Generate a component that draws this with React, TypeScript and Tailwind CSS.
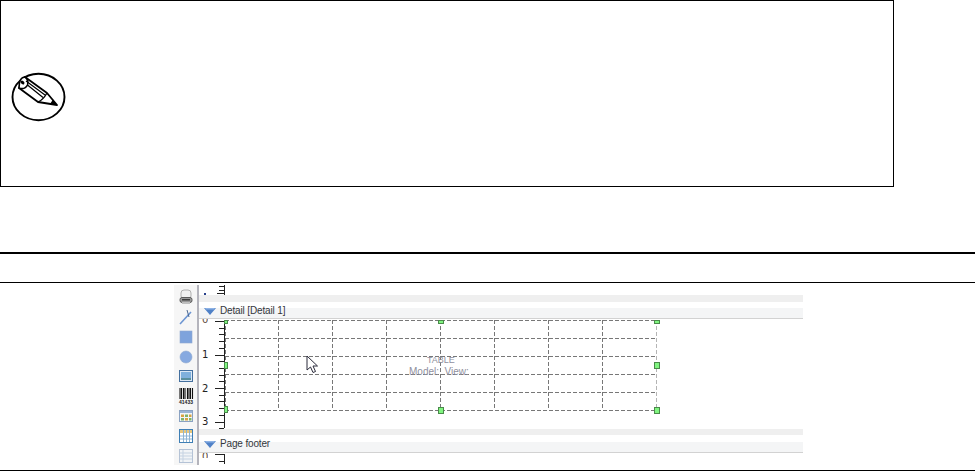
import React from "react";

const uiFont = { fontFamily: '"Liberation Sans", Arial, sans-serif' };
const rulerFont = { fontFamily: '"DejaVu Sans", sans-serif' };

function PencilNote() {
  return (
    <svg width="56" height="50" viewBox="0 0 56 50" fill="none" stroke="#000" className="mt-[6px]">
      <ellipse cx="28.5" cy="25" rx="26" ry="23.2" strokeWidth="1.9" />
      <path d="M15 5 L9 16 L28 30 L47 33 L37 21 Z" strokeWidth="1.8" fill="#fff" strokeLinejoin="round" />
      <path d="M15 5 Q9 5 9 16 Q15 18 17.5 13 Q19 8 15 5 Z" strokeWidth="1.6" fill="#fff" />
      <ellipse cx="12.5" cy="10.5" rx="2.2" ry="1.5" fill="#000" stroke="none" transform="rotate(40 12.5 10.5)" />
      <path d="M17.5 13 L33 25.5 M16 9 L35 23" strokeWidth="1.2" />
      <path d="M28 30 Q33 28 37 21" strokeWidth="1.4" />
      <path d="M40 32 L47 33 L43 27.5 Z" fill="#000" stroke="none" />
    </svg>
  );
}

function ToolIcon({ children }: { children: React.ReactNode }) {
  return (
    <svg width="16" height="16" viewBox="0 0 16 16" className="block">
      {children}
    </svg>
  );
}

function Toolbar() {
  return (
    <div className="flex w-[23px] flex-col items-center bg-[#f6f6f6]">
      <div className="flex h-[23px] items-center">
        <ToolIcon>
          <rect x="3" y="1" width="10" height="9" rx="3" fill="#f0f0f0" stroke="#b0b0b0" />
          <rect x="2" y="8.5" width="12" height="5" rx="2" fill="#9a9a9a" stroke="#5c5c5c" />
          <rect x="4" y="10" width="8" height="1.5" fill="#3e3e3e" />
          <rect x="4" y="13" width="8" height="2" fill="#c0c0c0" />
        </ToolIcon>
      </div>
      <div className="flex h-[18px] items-center">
        <ToolIcon>
          <path d="M2 15 L13 3" stroke="#6c95d2" strokeWidth="1.6" />
          <path d="M9 1 L11 8" stroke="#49668f" strokeWidth="1" />
        </ToolIcon>
      </div>
      <div className="flex h-[21px] items-center">
        <ToolIcon>
          <rect x="2" y="2" width="12" height="12" fill="#7ea3dc" stroke="#8fa8cf" strokeWidth="0.6" />
        </ToolIcon>
      </div>
      <div className="flex h-[19px] items-center">
        <ToolIcon>
          <circle cx="8" cy="8" r="6" fill="#86a9e0" stroke="#8fa8cf" strokeWidth="0.6" />
        </ToolIcon>
      </div>
      <div className="flex h-[20px] items-center">
        <ToolIcon>
          <rect x="1.5" y="2.5" width="13" height="11" fill="#dce8f5" stroke="#44709f" />
          <rect x="3" y="4" width="10" height="6" fill="#7fb0dc" />
          <rect x="3" y="10" width="10" height="2" fill="#5a8f9d" />
        </ToolIcon>
      </div>
      <div className="flex h-[20px] items-center">
        <ToolIcon>
          <path d="M2 0 V11 M3.5 0 V11 M5.5 0 V11 M7 0 V11 M9.5 0 V11 M11 0 V11 M12.5 0 V11 M14.5 0 V11" stroke="#111" strokeWidth="1.1" />
          <text x="8" y="15.5" textAnchor="middle" fontSize="5" fontWeight="700" fill="#222" stroke="none">41433</text>
        </ToolIcon>
      </div>
      <div className="flex h-[20px] items-center">
        <ToolIcon>
          <rect x="1.5" y="2.5" width="13" height="11" fill="#f3f6fa" stroke="#8aa2c2" />
          <rect x="2" y="3" width="12" height="2" fill="#9bb5d6" />
          <rect x="3" y="6.5" width="3" height="2.5" fill="#d9a441" />
          <rect x="7" y="6.5" width="3" height="2.5" fill="#7eb36a" />
          <rect x="11" y="6.5" width="2.5" height="2.5" fill="#d9a441" />
          <rect x="3" y="10" width="3" height="2.5" fill="#7eb36a" />
          <rect x="7" y="10" width="3" height="2.5" fill="#d9a441" />
          <rect x="11" y="10" width="2.5" height="2.5" fill="#7eb36a" />
        </ToolIcon>
      </div>
      <div className="flex h-[20px] items-center">
        <ToolIcon>
          <rect x="1.5" y="1.5" width="13" height="13" fill="#fff" stroke="#3f7fb5" />
          <rect x="2" y="2" width="12" height="3" fill="#e8c77a" />
          <path d="M2 8 H14 M2 11 H14 M5.5 2 V14 M8.5 2 V14 M11.5 2 V14" stroke="#8db4d4" strokeWidth="1" />
        </ToolIcon>
      </div>
      <div className="flex h-[19px] items-center opacity-60">
        <ToolIcon>
          <rect x="1.5" y="1.5" width="13" height="13" fill="#eef3f8" stroke="#8aa2c2" />
          <path d="M2 5 H14 M2 8 H14 M2 11 H14 M5 2 V14" stroke="#a5bcd6" strokeWidth="1" />
        </ToolIcon>
      </div>
    </div>
  );
}

function BandHeader({ label, lift }: { label: string; lift: string }) {
  return (
    <div className="h-[11px] border-b border-[#d2d2d2] bg-[#f4f5f6] pl-[5px]">
      <div className={`flex items-center gap-[4px] ${lift}`}>
        <svg width="12" height="7" viewBox="0 0 12 7" className="shrink-0">
          <path d="M0 0 H12 L6 7 Z" fill="#4f81c7" />
          <path d="M1 0 H11 L10 1.5 H2 Z" fill="#8fb3e6" />
        </svg>
        <span className="text-[10px] leading-[10px] tracking-[-0.15px] whitespace-nowrap text-[#33373d]">{label}</span>
      </div>
    </div>
  );
}

const rulerTicks = Array.from({ length: 17 }, (_, i) => 2 + i * 6.7);

function Ruler() {
  return (
    <div className="relative h-[110px] w-[26px] shrink-0" style={rulerFont}>
      <svg width="26" height="110" viewBox="0 0 26 110" className="block">
        <path d="M25.5 1 V109" stroke="#222" strokeWidth="1" />
        {rulerTicks.map((y, i) => (
          <path
            key={y}
            d={`M${i % 5 === 0 ? 16 : 20} ${Math.round(y) + 0.5} H25`}
            stroke="#222"
            strokeWidth="1"
          />
        ))}
      </svg>
      <span className="absolute top-0 left-[3px] h-[5px] overflow-hidden text-[10px] leading-[10px] text-[#5c4a3a]">
        <span className="relative top-[-4px]">0</span>
      </span>
      <span className="absolute top-[31px] left-[3px] text-[10px] leading-[10px] text-[#222]">1</span>
      <span className="absolute top-[65px] left-[3px] text-[10px] leading-[10px] text-[#222]">2</span>
      <span className="absolute top-[98px] left-[3px] text-[10px] leading-[10px] text-[#222]">3</span>
    </div>
  );
}

function Handle({ className }: { className: string }) {
  return <div className={`absolute border border-[#4a8a4a] bg-[#80f580] ${className}`} />;
}

function TableGrid() {
  const xs = [53, 107, 161, 215, 269, 323, 377];
  const ys = [19, 37, 55, 73];
  return (
    <div className="relative h-[110px] flex-1">
      <svg width="440" height="100" viewBox="0 0 440 100" className="block" fill="none">
        <g stroke="#777" strokeWidth="1" strokeDasharray="4 2">
          <path d="M0 1.5 H432" />
          {ys.map((y) => (
            <path key={y} d={`M0 ${y}.5 H432`} />
          ))}
          <path d="M0 91.5 H432" />
          <path d="M0.5 1 V91" />
          {xs.map((x) => (
            <path key={x} d={`M${x}.5 1 V91`} />
          ))}
        </g>
        <path d="M431.5 1 V91" stroke="#b5b5b5" strokeWidth="1" strokeDasharray="4 2" />
      </svg>
      <Handle className="top-[1px] left-[-1px] h-[4px] w-[4px]" />
      <Handle className="top-[1px] left-[213px] h-[4px] w-[6px]" />
      <Handle className="top-[1px] left-[429px] h-[4px] w-[6px]" />
      <Handle className="top-[43px] left-[-1px] h-[7px] w-[4px]" />
      <Handle className="top-[43px] left-[429px] h-[7px] w-[6px]" />
      <Handle className="top-[87px] left-[-1px] h-[7px] w-[4px]" />
      <Handle className="top-[88px] left-[213px] h-[7px] w-[6px]" />
      <Handle className="top-[88px] left-[429px] h-[7px] w-[6px]" />
      <div className="absolute top-[36px] left-[184px] text-center text-[10px] leading-[11px] whitespace-nowrap text-[#8f8f9e]">
        <div className="pl-[4px] text-[9px]">TABLE</div>
        <div>Model:&nbsp; View:</div>
      </div>
      <svg width="13" height="19" viewBox="0 0 13 19" className="absolute top-[36px] left-[81px]">
        <path d="M1 1 V15 L4.5 12 L7 17.5 L9.5 16.5 L7 11 H11.5 Z" fill="#fff" stroke="#2a2a3a" strokeWidth="1" />
      </svg>
    </div>
  );
}

function ReportDesigner() {
  return (
    <div className="ml-[174px] flex h-[180px] w-[629px]" style={uiFont}>
      <Toolbar />
      <div className="w-[2px] bg-[#b4b4bc]" />
      <div className="flex min-w-0 flex-1 flex-col">
        <div className="relative h-[10px]">
          <svg width="26" height="10" viewBox="0 0 26 10" className="block">
            <path d="M25.5 0 V10 M20 1.5 H25 M20 5.5 H25 M18 8.5 H25" fill="none" stroke="#222" strokeWidth="1" />
            <rect x="5" y="8" width="2" height="2" fill="#27408b" />
          </svg>
        </div>
        <div className="h-[7px] bg-[#efefef]" />
        <div className="h-[6px]" />
        <BandHeader label="Detail [Detail 1]" lift="-translate-y-[2px]" />
        <div className="flex">
          <Ruler />
          <TableGrid />
        </div>
        <div className="h-[6px] bg-[#efefef]" />
        <div className="h-[7px]" />
        <BandHeader label="Page footer" lift="-translate-y-[3px]" />
        <div className="relative flex h-[12px] overflow-hidden">
          <svg width="26" height="12" viewBox="0 0 26 12" className="block">
            <path d="M16 1.5 H25 M20 8.5 H25 M25.5 1 V11" fill="none" stroke="#222" strokeWidth="1" />
          </svg>
          <span
            className="absolute top-0 left-[3px] h-[5px] overflow-hidden text-[10px] leading-[10px] text-[#5c4a3a]"
            style={rulerFont}
          >
            <span className="relative top-[-1px]">0</span>
          </span>
        </div>
      </div>
    </div>
  );
}

export default function App() {
  return (
    <div className="h-[471px] w-[975px] overflow-hidden bg-white">
      <div className="flex h-[187px] w-[894px] items-center border border-black pl-[9px]">
        <PencilNote />
      </div>
      <div className="mt-[65px] h-[2px] bg-black" />
      <div className="mt-[28px] h-px bg-black" />
      <div className="mt-[2px]">
        <ReportDesigner />
      </div>
      <div className="mt-[5px] h-px bg-black" />
    </div>
  );
}
